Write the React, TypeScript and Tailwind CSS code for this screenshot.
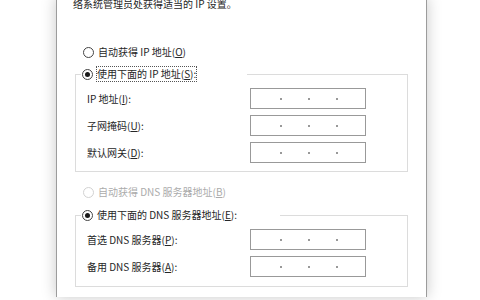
const font = "font-['Noto_Sans_CJK_SC','Microsoft_YaHei',sans-serif]";

const Radio = ({ checked, disabled }: { checked?: boolean; disabled?: boolean }) => (
  <span
    className={`flex h-[11px] w-[11px] shrink-0 items-center justify-center rounded-full border bg-white ${
      disabled ? 'border-[#d2d2d2]' : 'border-[#444]'
    }`}
  >
    {checked && <span className="h-[5px] w-[5px] rounded-full bg-[#1a1a1a]" />}
  </span>
);

const Key = ({ k }: { k: string }) => <span className="underline underline-offset-[1px]">{k}</span>;

const IpBox = () => (
  <div className="flex h-[21px] w-[116px] items-center gap-[26px] border border-[#999] bg-white pl-[29px]">
    <span className="h-[2px] w-[2px] rounded-full bg-[#777]" />
    <span className="h-[2px] w-[2px] rounded-full bg-[#777]" />
    <span className="h-[2px] w-[2px] rounded-full bg-[#777]" />
  </div>
);

const Row = ({ label }: { label: React.ReactNode }) => (
  <div className="flex items-center">
    <span className="w-[163px]">{label}</span>
    <IpBox />
  </div>
);

export default function App() {
  return (
    <div className={`h-[300px] w-[480px] overflow-hidden bg-white text-[10px] leading-[14px] text-[#262626] ${font}`}>
      <div className="ml-[56px] h-full w-[371px] border-x border-[#9c9c9c] bg-white shadow-[0_0_14px_rgba(0,0,0,0.22)]">
        <div className="pl-[16px]">
          <p className="-mt-[3px]">络系统管理员处获得适当的 IP 设置。</p>

          <div className="ml-[10px] mt-[34px] flex items-center gap-[4px]">
            <Radio />
            <span>
              自动获得 IP 地址(<Key k="O" />)
            </span>
          </div>

          <fieldset className="ml-[2px] mt-[8px] w-[333px] border border-[#dcdcdc] px-0 pb-[8px]">
            <legend className="ml-[5px] flex w-[166px] items-center gap-[4px] bg-white pl-[1px]">
              <Radio checked />
              <span className="outline-1 outline-dotted outline-[#555]">
                使用下面的 IP 地址(<Key k="S" />):
              </span>
            </legend>
            <div className="flex flex-col gap-[6px] pl-[11px] pt-[7px]">
              <Row label={<>IP 地址(<Key k="I" />):</>} />
              <Row label={<>子网掩码(<Key k="U" />):</>} />
              <Row label={<>默认网关(<Key k="D" />):</>} />
            </div>
          </fieldset>

          <div className="ml-[10px] mt-[13px] flex items-center gap-[4px] text-[#ababab]">
            <Radio disabled />
            <span>
              自动获得 DNS 服务器地址(<Key k="B" />)
            </span>
          </div>

          <fieldset className="ml-[2px] mt-[9px] w-[333px] border border-[#dcdcdc] px-0 pb-[9px]">
            <legend className="ml-[5px] flex w-[199px] items-center gap-[4px] bg-white pl-[1px]">
              <Radio checked />
              <span>
                使用下面的 DNS 服务器地址(<Key k="E" />):
              </span>
            </legend>
            <div className="flex flex-col gap-[6px] pl-[11px] pt-[7px]">
              <Row label={<>首选 DNS 服务器(<Key k="P" />):</>} />
              <Row label={<>备用 DNS 服务器(<Key k="A" />):</>} />
            </div>
          </fieldset>
        </div>
      </div>
    </div>
  );
}
